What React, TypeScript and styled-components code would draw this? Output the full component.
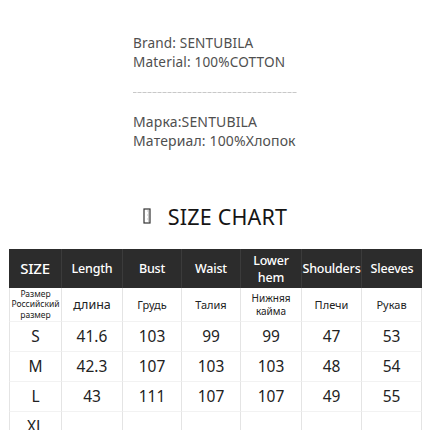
import styled, { createGlobalStyle } from "styled-components";
import { Fragment } from "react";

const GlobalStyle = createGlobalStyle`
  body {
    margin: 0;
    background: #ffffff;
    font-family: "Noto Sans", "Open Sans", sans-serif;
  }
`;

const Page = styled.div`
  width: 430px;
  height: 430px;
  overflow: hidden;
  background: #fff;
`;

const InfoBlock = styled.div`
  width: 164px;
  margin: 0 auto;
  padding-top: 33px;
`;

const InfoLine = styled.div<{ $size?: number }>`
  font-size: ${(p) => p.$size ?? 13.6}px;
  line-height: 19px;
  color: #4f4f4f;
  white-space: nowrap;
  letter-spacing: 0.15px;
`;

const Divider = styled.div`
  height: 1px;
  margin: 21px 0 19px;
  background: repeating-linear-gradient(90deg, #c8c8c8 0 3px, #e2e2e2 3px 5px);
`;

const RuLines = styled.div`
  line-height: 18px;
`;

const ChartTitle = styled.div`
  display: flex;
  align-items: center;
  justify-content: center;
  gap: 17px;
  margin-top: 53px;
  height: 26px;
  font-size: 21.5px;
  color: #151515;
  letter-spacing: 0.2px;
`;

const RulerIcon = styled.svg`
  width: 8px;
  height: 16px;
`;

const Table = styled.div`
  display: grid;
  grid-template-columns: 53px 61px 59px 59px 61px 60px 60px;
  margin: 20px 0 0 9px;
`;

const HeadCell = styled.div<{ $big?: boolean }>`
  height: 39px;
  background: #2c2c2c;
  color: #fff;
  display: flex;
  align-items: center;
  justify-content: center;
  text-align: center;
  font-size: ${(p) => (p.$big ? 15 : 12.5)}px;
  font-weight: 500;
  line-height: 17px;
  letter-spacing: -0.2px;
  white-space: nowrap;
  border-right: 1px solid #3b3b3b;
  &:nth-child(7) {
    border-right: none;
  }
`;

const Cell = styled.div<{ $h: number; $fs: number; $lh?: number; $first?: boolean }>`
  height: ${(p) => p.$h}px;
  display: flex;
  align-items: center;
  justify-content: center;
  text-align: center;
  white-space: nowrap;
  font-size: ${(p) => p.$fs}px;
  line-height: ${(p) => p.$lh ?? p.$fs + 2}px;
  color: #222;
  border-right: 1px solid #e4e4e4;
  border-bottom: 1px solid #f2f2f2;
  border-left: ${(p) => (p.$first ? "1px solid #e4e4e4" : "none")};
  box-sizing: border-box;
`;

const headers = ["Length", "Bust", "Waist", "Lower\nhem", "Shoulders", "Sleeves"];
const ruLabels = ["длина", "Грудь", "Талия", "Нижняя\nкайма", "Плечи", "Рукав"];
const rows: [string, string[]][] = [
  ["S", ["41.6", "103", "99", "99", "47", "53"]],
  ["M", ["42.3", "107", "103", "103", "48", "54"]],
  ["L", ["43", "111", "107", "107", "49", "55"]],
  ["XL", ["", "", "", "", "", ""]],
];

function multiline(t: string) {
  const parts = t.split("\n");
  return (
    <span>
      {parts.map((s, i) => (
        <Fragment key={i}>
          {i > 0 && <br />}
          {s}
        </Fragment>
      ))}
    </span>
  );
}

export default function App() {
  return (
    <Page>
      <GlobalStyle />
      <InfoBlock>
        <InfoLine>Brand: SENTUBILA</InfoLine>
        <InfoLine>Material: 100%COTTON</InfoLine>
        <Divider />
        <RuLines>
          <InfoLine $size={14}>Марка:SENTUBILA</InfoLine>
          <InfoLine $size={14}>Материал: 100%Хлопок</InfoLine>
        </RuLines>
      </InfoBlock>
      <ChartTitle>
        <RulerIcon viewBox="0 0 8 16">
          <rect x="1" y="1" width="6" height="14" fill="none" stroke="#333" strokeWidth="1.2" />
          <path d="M4.5 3h2M5 5h1.5M4.5 7h2M5 9h1.5M4.5 11h2M5 13h1.5" stroke="#777" strokeWidth="0.8" />
        </RulerIcon>
        <span>SIZE CHART</span>
      </ChartTitle>
      <Table>
        <HeadCell $big>SIZE</HeadCell>
        {headers.map((h) => (
          <HeadCell key={h}>{multiline(h)}</HeadCell>
        ))}
        <Cell $first $h={34} $fs={8.5} $lh={10.5}>
          {multiline("Размер\nРоссийский\nразмер")}
        </Cell>
        {ruLabels.map((l, i) => (
          <Cell key={l} $h={34} $fs={i === 0 ? 12.5 : i === 3 ? 10 : 11} $lh={13}>
            {multiline(l)}
          </Cell>
        ))}
        {rows.flatMap(([size, vals]) => [
          <Cell key={size} $first $h={30} $fs={15.5}>
            {size}
          </Cell>,
          ...vals.map((v, j) => (
            <Cell key={size + j} $h={30} $fs={15.5}>
              {v}
            </Cell>
          )),
        ])}
      </Table>
    </Page>
  );
}
